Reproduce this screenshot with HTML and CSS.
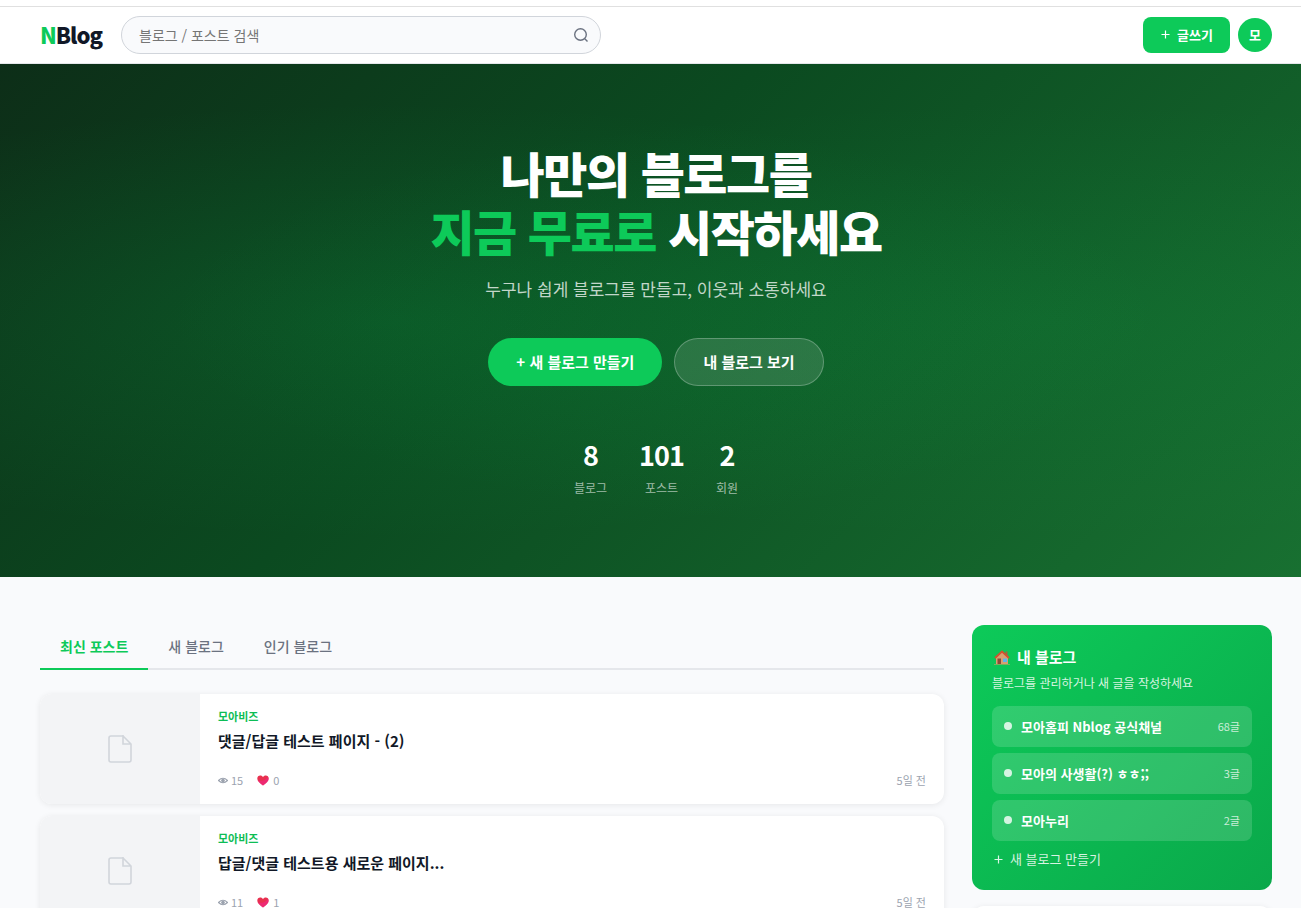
FILE: index.html
```
<!DOCTYPE html>
<html lang="ko">
<head>
  <meta charset="UTF-8">
  <meta name="viewport" content="width=device-width, initial-scale=1">
  <title>NBlog</title>
  <link rel="stylesheet" href="styles.css">
</head>
<body>

  <svg class="sprite" aria-hidden="true">
    <symbol id="icon-doc" viewBox="0 0 24 28">
      <path d="M16 1H3A2 2 0 0 0 1 3v22A2 2 0 0 0 3 27h18a2 2 0 0 0 2-2V9L15 1v8h8"/>
    </symbol>
    <symbol id="icon-eye" viewBox="0 0 12 8">
      <path d="M.6 4Q6-1.500 11.400 4Q6 9.500.6 4z" fill="none" stroke="#9ca3af" stroke-width="1.300"/>
      <circle cx="6" cy="4" r="2.200" fill="#9ca3af"/>
    </symbol>
    <symbol id="icon-heart" viewBox="0 0 12 11">
      <path d="M6 10.500C2 7.500.3 5.800.3 3.500.3 1.600 1.600.5 3.200.5 4.500.5 5.500 1.200 6 2 6.500 1.200 7.500.5 8.800.5c1.600 0 2.900 1.100 2.900 3 0 2.300-1.700 4-5.700 7z" fill="#e8304f"/>
      <path d="M6 10.500C3.500 8.600 1.500 7 .8 5.200c3 1.500 7 .5 10.200-3.200 1.500 3-.5 5.300-5 8.500z" fill="#f0248a" opacity=".6"/>
    </symbol>
  </svg>

  <div class="top-strip"></div>

  <header class="header">
    <a class="logo" href="#"><span>N</span>Blog</a>
    <form class="search">
      <input type="text" placeholder="블로그 / 포스트 검색" aria-label="블로그 / 포스트 검색">
      <button type="button" aria-label="검색">
        <svg width="16" height="16" viewBox="0 0 16 16"><circle cx="7.500" cy="7.500" r="5.800"/><path d="M11.800 11.800l2.700 2.700"/></svg>
      </button>
    </form>
    <div class="header-right">
      <button type="button" class="btn-write">
        <svg class="plus" width="9" height="9" viewBox="0 0 9 9"><path d="M4.500 0.500v8M0.500 4.500h8"/></svg>
        글쓰기
      </button>
      <button type="button" class="avatar">모</button>
    </div>
  </header>

  <section class="hero">
    <h1>나만의 블로그를<br><em>지금 무료로</em> 시작하세요</h1>
    <p class="hero-desc">누구나 쉽게 블로그를 만들고, 이웃과 소통하세요</p>
    <div class="hero-btns">
      <a class="btn-primary" href="#">+ 새 블로그 만들기</a>
      <a class="btn-ghost" href="#">내 블로그 보기</a>
    </div>
    <div class="stats">
      <div class="stat"><strong>8</strong><span>블로그</span></div>
      <div class="stat"><strong>101</strong><span>포스트</span></div>
      <div class="stat"><strong>2</strong><span>회원</span></div>
    </div>
  </section>

  <main class="main">
    <div class="content">
      <nav class="tabs">
        <button type="button" class="tab active">최신 포스트</button>
        <button type="button" class="tab">새 블로그</button>
        <button type="button" class="tab">인기 블로그</button>
      </nav>

      <article class="post">
        <div class="thumb"><svg width="24" height="28"><use href="#icon-doc"/></svg></div>
        <div class="post-body">
          <a class="post-blog" href="#">모아비즈</a>
          <h2><a href="#">댓글/답글 테스트 페이지 - (2)</a></h2>
          <div class="post-meta">
            <span><svg width="10" height="7"><use href="#icon-eye"/></svg>15</span>
            <span class="likes"><svg width="12" height="11"><use href="#icon-heart"/></svg>0</span>
            <time>5일 전</time>
          </div>
        </div>
      </article>

      <article class="post">
        <div class="thumb"><svg width="24" height="28"><use href="#icon-doc"/></svg></div>
        <div class="post-body">
          <a class="post-blog" href="#">모아비즈</a>
          <h2><a href="#">답글/댓글 테스트용 새로운 페이지...</a></h2>
          <div class="post-meta">
            <span><svg width="10" height="7"><use href="#icon-eye"/></svg>11</span>
            <span class="likes"><svg width="12" height="11"><use href="#icon-heart"/></svg>1</span>
            <time>5일 전</time>
          </div>
        </div>
      </article>
    </div>

    <aside class="sidebar">
      <section class="my-blog">
        <h3>
          <svg width="16" height="15" viewBox="0 0 16 15">
            <path d="M0 14h16v1H0z" fill="#7fae5c"/>
            <path d="M11.500 1.500h2v4h-2z" fill="#a8613f"/>
            <path d="M2 7l6-5 6 5v7H2z" fill="#d9a070"/>
            <path d="M3.500 8.500H7V14H3.500z" fill="#8a4b38"/>
            <path d="M9 8.500h4V12H9z" fill="#5db4ec"/>
            <path d="M1 8l7-6.500L15 8" fill="none" stroke="#d4502f" stroke-width="1.800"/>
          </svg>
          내 블로그
        </h3>
        <p>블로그를 관리하거나 새 글을 작성하세요</p>
        <ul>
          <li><a href="#"><i></i><b>모아홈피 Nblog 공식채널</b><small>68글</small></a></li>
          <li><a href="#"><i></i><b>모아의 사생활(?) ㅎㅎ;;</b><small>3글</small></a></li>
          <li><a href="#"><i></i><b>모아누리</b><small>2글</small></a></li>
        </ul>
        <a class="add-blog" href="#">
          <svg class="plus" width="9" height="9" viewBox="0 0 9 9"><path d="M4.500 0.500v8M0.500 4.500h8"/></svg>
          새 블로그 만들기
        </a>
      </section>
      <section class="side-card"></section>
    </aside>
  </main>

</body>
</html>
```
FILE: styles.css
```
* { box-sizing: border-box; margin: 0; padding: 0; }

body {
  font-family: "Noto Sans CJK KR", "Noto Sans", sans-serif;
  font-size: 14px;
  color: #111827;
  background: #f9fafc;
  height: 100vh;
  overflow: hidden;
}

a { color: inherit; text-decoration: none; }
button, input { font-family: inherit; }
button { border: 0; background: none; cursor: pointer; }
ul { list-style: none; }

.sprite { position: absolute; width: 0; height: 0; }
.plus { fill: none; stroke: currentColor; stroke-width: 1.2; }

/* header */
.top-strip {
  height: 7px;
  background: #fff;
  border-bottom: 1px solid #e0e0e0;
}

.header {
  display: flex;
  align-items: center;
  height: 57px;
  padding: 0 29px 0 40px;
  background: #fff;
  border-bottom: 1px solid #e5e7eb;
}

.logo {
  width: 81px;
  padding-bottom: 2px;
  font-size: 22px;
  font-weight: 900;
  line-height: 32px;
  letter-spacing: -1px;
}
.logo span { color: #0dca59; }

.search {
  display: flex;
  align-items: center;
  flex: 0 1 480px;
  height: 38px;
  padding: 0 11px 0 17px;
  background: #f9fafc;
  border: 1px solid #d1d5db;
  border-radius: 19px;
}
.search input {
  flex: 1;
  min-width: 0;
  border: 0;
  outline: 0;
  background: none;
  font-size: 14px;
}
.search input::placeholder { color: #757575; }
.search button { display: flex; }
.search svg { fill: none; stroke: #6b7280; stroke-width: 1.4; }

.header-right {
  display: flex;
  align-items: center;
  gap: 8px;
  margin-left: auto;
}
.btn-write {
  display: flex;
  align-items: center;
  gap: 7px;
  height: 36px;
  padding: 0 17px 2px 18px;
  border-radius: 8px;
  background: #0dca59;
  color: #fff;
  font-size: 13px;
  font-weight: 700;
}
.avatar {
  width: 34px;
  height: 34px;
  padding-bottom: 2px;
  border-radius: 50%;
  background: #0dca59;
  color: #fff;
  font-size: 13px;
  font-weight: 700;
}

/* hero */
.hero {
  padding: 79px 0 80px 11px;
  text-align: center;
  color: #fff;
  background:
    radial-gradient(ellipse at 30% 50%, rgba(13, 202, 89, .14) 0%, transparent 60%),
    radial-gradient(ellipse at 80% 50%, rgba(13, 202, 89, .1) 0%, transparent 60%),
    linear-gradient(135deg, #0d2e18 0%, #0b4a20 42%, #187031 100%);
}
.hero h1 {
  font-size: 48px;
  font-weight: 900;
  line-height: 58px;
  letter-spacing: -0.03em;
}
.hero h1 em { font-style: normal; color: #0dca59; }
.hero-desc {
  margin-top: 16px;
  font-size: 17px;
  line-height: 27px;
  color: rgba(255, 255, 255, .75);
}
.hero-btns {
  display: flex;
  justify-content: center;
  gap: 12px;
  margin-top: 36px;
}
.hero-btns a {
  height: 48px;
  padding: 0 28px;
  border-radius: 24px;
  font-size: 15px;
  font-weight: 700;
  line-height: 48px;
}
.btn-primary { background: #0dca59; }
.hero-btns .btn-ghost {
  background: rgba(255, 255, 255, .12);
  border: 1px solid rgba(255, 255, 255, .25);
  line-height: 46px;
}
.stats {
  display: flex;
  justify-content: center;
  gap: 32px;
  margin-top: 48px;
}
.stat strong {
  display: block;
  font-size: 27px;
  font-weight: 700;
  line-height: 42px;
  letter-spacing: -1px;
}
.stat span {
  display: block;
  margin-top: 2px;
  font-size: 12px;
  line-height: 19px;
  color: rgba(255, 255, 255, .6);
}

/* main */
.main {
  display: flex;
  align-items: flex-start;
  gap: 28px;
  padding: 48px 29px 48px 40px;
}
.content { flex: 1; min-width: 0; }

.tabs {
  display: flex;
  margin-bottom: 24px;
  border-bottom: 2px solid #e5e7eb;
}
.tab {
  margin-bottom: -2px;
  padding: 11px 20px;
  border-bottom: 2px solid transparent;
  color: #6b7280;
  font-size: 14px;
  font-weight: 500;
  line-height: 21px;
}
.tab.active {
  color: #0dca59;
  border-color: #0dca59;
  font-weight: 700;
}

.post {
  display: flex;
  height: 110px;
  margin-bottom: 12px;
  border-radius: 12px;
  overflow: hidden;
  background: #fff;
  box-shadow: 0 1px 6px rgba(0, 0, 0, .08);
}
.thumb {
  display: flex;
  align-items: center;
  justify-content: center;
  width: 160px;
  background: #f3f4f6;
}
.thumb svg { fill: none; stroke: #d1d5db; stroke-width: 1.6; }
.post-body {
  display: flex;
  flex-direction: column;
  flex: 1;
  padding: 13px 18px 15px;
}
.post-blog {
  color: #0dbd55;
  font-size: 11px;
  font-weight: 700;
  line-height: 18px;
}
.post h2 {
  margin-top: 5px;
  font-size: 15px;
  font-weight: 700;
  line-height: 21px;
}
.post-meta {
  display: flex;
  align-items: center;
  gap: 14px;
  margin-top: auto;
  color: #9ca3af;
  font-size: 11px;
  line-height: 18px;
}
.post-meta span {
  display: flex;
  align-items: center;
  gap: 3px;
}
.post-meta .likes { gap: 4px; }
.post-meta time { margin-left: auto; }

/* sidebar */
.sidebar { width: 300px; }

.my-blog {
  padding: 20px;
  border-radius: 12px;
  background: linear-gradient(135deg, #0dca59, #0aa84a);
  color: #fff;
}
.my-blog h3 {
  display: flex;
  align-items: center;
  gap: 7px;
  padding-left: 2px;
  font-size: 15px;
  font-weight: 700;
  line-height: 24px;
}
.my-blog p {
  margin: 4px 0 13px;
  font-size: 12px;
  line-height: 20px;
  color: rgba(255, 255, 255, .85);
}
.my-blog li { margin-bottom: 6px; }
.my-blog li a {
  display: flex;
  align-items: center;
  gap: 9px;
  height: 41px;
  padding: 0 12px 1px;
  border-radius: 8px;
  background: rgba(255, 255, 255, .15);
}
.my-blog i {
  width: 8px;
  height: 8px;
  border-radius: 50%;
  background: rgba(255, 255, 255, .8);
}
.my-blog b { font-size: 13px; }
.my-blog small {
  margin-left: auto;
  font-size: 11px;
  color: rgba(255, 255, 255, .75);
}
.add-blog {
  display: flex;
  align-items: center;
  gap: 7px;
  padding: 2px 2px 1px;
  font-size: 13px;
  line-height: 20px;
  color: rgba(255, 255, 255, .85);
}
.side-card {
  height: 200px;
  margin-top: 16px;
  border-radius: 12px;
  background: #fff;
  box-shadow: 0 1px 6px rgba(0, 0, 0, .08);
}
```
